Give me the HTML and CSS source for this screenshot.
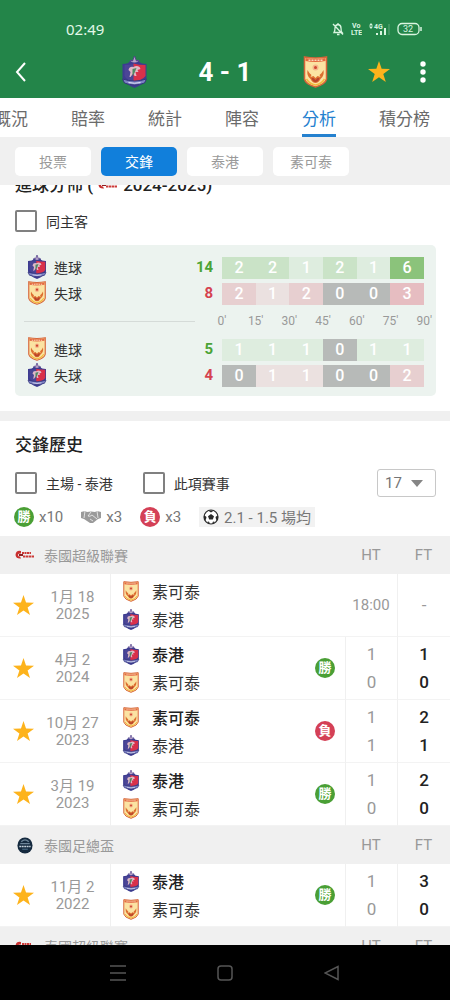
FILE: index.html
```html
<!DOCTYPE html>
<html lang="zh-Hant">
<head>
    <meta charset="UTF-8">
    <meta name="viewport" content="width=device-width, initial-scale=1.0">
    <title>分析 - 交鋒</title>
    <link rel="stylesheet" href="styles.css">
</head>
<body>
    <!-- icons -->
    <svg class="defs" width="0" height="0" aria-hidden="true">
        <symbol id="port" viewBox="0 0 26 32">
            <path d="M8 8 L9 4 L11 5 L13 0 L15 5 L17 4 L18 8Z" fill="#b9a3c9" stroke="#54438c" stroke-width="1"/>
            <path d="M1 8 Q7 8 9 5 Q13 8 17 5 Q19 8 25 8 V22 Q23 28 13 32 Q3 28 1 22Z" fill="#3d3c90"/>
            <path d="M3 9 Q9 9 13 7.500 V26 Q5 24 3 20Z" fill="#4b4596"/>
            <path d="M12 7.500 Q17 9 24 9 V20 Q21 24 12 26Z" fill="#d9304a"/>
            <path d="M7 14 Q8 10 12 11 Q15 9 18 11 L19 13 L16 14 L17 16 L14 16 L15 20 H13 L12 17 L9 21 H8 L9 16Z" fill="#e0b9c6"/>
            <path d="M11 13 L15 12 L13 17 L11 20Z" fill="#4f8a63"/>
            <path d="M1 23 Q13 27 25 23 L23 27 Q13 31 3 27Z" fill="#7d83c4" stroke="#34357c" stroke-width="1"/>
            <path d="M7 26.500 Q13 28 19 26.500" fill="none" stroke="#e4e4f5" stroke-width="1"/>
        </symbol>
        <symbol id="sukhothai" viewBox="0 0 24 32">
            <path d="M1 1 Q12 3 23 1 V23 Q22 28 12 31 Q2 28 1 23Z" fill="#fbe3a2" stroke="#d6653a" stroke-width="1.500"/>
            <path d="M2 2 Q12 4 22 2 V5 Q12 7 2 5Z" fill="#e5693f"/>
            <path d="M5 4.300 H19" stroke="#f9d9bc" stroke-width="1.500" stroke-dasharray="2 1"/>
            <circle cx="12" cy="11.500" r="3" fill="#f5b58a"/>
            <circle cx="12" cy="11.500" r="1.500" fill="#cf4630"/>
            <path d="M4 14 Q3 20 7 23 Q9 27 12 27 Q15 27 17 23 Q21 20 20 14 Q18 18 16 19 L17 21 L14 20 L12 22 L10 20 L7 21 L8 19 Q6 18 4 14Z" fill="#dd6f30"/>
            <path d="M8 22 L10 22 L12 24 L14 22 L16 22 Q15 26 12 26 Q9 26 8 22Z" fill="#b8432c"/>
            <path d="M3 23 Q6 28 12 29 Q18 28 21 23" fill="none" stroke="#f2b93c" stroke-width="1.500"/>
        </symbol>
        <symbol id="star" viewBox="0 0 20 20">
            <path d="M10 0 L12.400 7.100 L20 7.300 L13.900 11.800 L16.200 19 L10 14.700 L3.800 19 L6.100 11.800 L0 7.300 L7.600 7.100Z" fill="#fdb31c"/>
        </symbol>
        <symbol id="thaileague" viewBox="0 0 20 10">
            <path d="M6 1 Q1 0 0.500 5 Q1 9 6 8.500 L5 6.500 Q3 6.500 3 5 Q3 3 6 3.500Z" fill="#c9302f"/>
            <path d="M4 5 H8" stroke="#8d1f22" stroke-width="2"/>
            <path d="M7 3 H16" stroke="#cc3a38" stroke-width="2" stroke-dasharray="2 0.500"/>
            <path d="M8 6.500 H19" stroke="#cc3a38" stroke-width="2" stroke-dasharray="2.500 0.500"/>
        </symbol>
        <symbol id="facup" viewBox="0 0 18 18">
            <ellipse cx="9" cy="9" rx="8" ry="8.500" fill="#152a3f"/>
            <path d="M5 5 Q9 1 13 5 M4 7 H14" fill="none" stroke="#6d8498" stroke-width="1.300"/>
            <path d="M3 10 H15" stroke="#c6d2dc" stroke-width="1.700" stroke-dasharray="2 0.600"/>
            <path d="M6 13 H12" stroke="#3f5c73" stroke-width="1.500"/>
        </symbol>
    </svg>

    <header class="header">
        <div class="status">
            <span class="clock">02:49</span>
            <div class="status-icons">
                <svg width="12" height="14" viewBox="0 0 12 14" fill="none" stroke="#d9f5e0" stroke-width="1.300">
                    <path d="M2 10.500 H10 Q9 9.500 9 6 Q9 3 6 2.500 Q3 3 3 6 Q3 9 2 10.500Z M6 2.500 V1 M5 12.500 H7.500 M1 2 L11 12.500"/>
                </svg>
                <svg width="11" height="14" viewBox="0 0 11 14" class="tiny" aria-label="VoLTE">
                    <text x="1" y="6">Vo</text>
                    <text x="0" y="13">LTE</text>
                </svg>
                <svg width="21" height="14" viewBox="0 0 21 14" class="tiny">
                    <path d="M2 1 L4 3.500 H0Z M2 7 L4 4.500 H0Z" fill="#d9f5e0"/>
                    <text x="5" y="7">4G</text>
                    <path d="M8 11 V13 M12 9 V13 M16 6 V13" stroke="#d9f5e0" stroke-width="2" fill="none"/>
                    <path d="M20 2 V13" stroke="#5fa67a" stroke-width="1" fill="none"/>
                </svg>
                <svg width="25" height="14" viewBox="0 0 25 14" class="tiny">
                    <rect x="1" y="1.500" width="21" height="11" rx="4" fill="none" stroke="#d9f5e0" stroke-width="1.300"/>
                    <path d="M24 5 V9" stroke="#d9f5e0" stroke-width="1.500"/>
                    <text x="6" y="10" class="battery">32</text>
                </svg>
            </div>
        </div>
        <div class="appbar">
            <button class="icon-btn back" aria-label="返回">
                <svg width="14" height="20" viewBox="0 0 14 20"><path d="M11 1 L3 10 L11 19" fill="none" stroke="#fff" stroke-width="2"/></svg>
            </button>
            <div class="match">
                <svg width="27" height="32"><use href="#port"/></svg>
                <h1 class="score">4 - 1</h1>
                <svg width="27" height="32"><use href="#sukhothai"/></svg>
            </div>
            <div class="actions">
                <button class="icon-btn" aria-label="收藏"><svg width="22" height="22"><use href="#star"/></svg></button>
                <button class="icon-btn" aria-label="更多">
                    <svg width="6" height="24" viewBox="0 0 6 24" fill="#fff"><circle cx="3" cy="4" r="2.700"/><circle cx="3" cy="12" r="2.700"/><circle cx="3" cy="20" r="2.700"/></svg>
                </button>
            </div>
        </div>
    </header>

    <nav class="tabs">
        <a href="#">概況</a>
        <a href="#">賠率</a>
        <a href="#">統計</a>
        <a href="#">陣容</a>
        <a href="#" class="active">分析</a>
        <a href="#">積分榜</a>
    </nav>

    <div class="pills">
        <button class="pill">投票</button>
        <button class="pill active">交鋒</button>
        <button class="pill">泰港</button>
        <button class="pill">素可泰</button>
    </div>

    <main class="content">
        <section class="goals">
            <h2 class="title">進球分佈 ( <svg width="20" height="10"><use href="#thaileague"/></svg> 2024-2025)</h2>
            <label class="check"><input type="checkbox"> 同主客</label>

            <div class="card">
                <div class="row">
                    <div class="team">
                        <svg width="20" height="24"><use href="#port"/></svg>
                        <span>進球</span>
                        <b class="for">14</b>
                    </div>
                    <div class="heat">
                        <span class="g2">2</span><span class="g2">2</span><span class="g1">1</span><span class="g2">2</span><span class="g1">1</span><span class="g6">6</span>
                    </div>
                </div>
                <div class="row">
                    <div class="team">
                        <svg width="20" height="24"><use href="#sukhothai"/></svg>
                        <span>失球</span>
                        <b class="against">8</b>
                    </div>
                    <div class="heat">
                        <span class="r2">2</span><span class="r1">1</span><span class="r2">2</span><span class="zero">0</span><span class="zero">0</span><span class="r3">3</span>
                    </div>
                </div>
                <div class="row axis">
                    <div class="line"></div>
                    <div class="minutes">
                        <span>0'</span><span>15'</span><span>30'</span><span>45'</span><span>60'</span><span>75'</span><span>90'</span>
                    </div>
                </div>
                <div class="row">
                    <div class="team">
                        <svg width="20" height="24"><use href="#sukhothai"/></svg>
                        <span>進球</span>
                        <b class="for">5</b>
                    </div>
                    <div class="heat">
                        <span class="g1">1</span><span class="g1">1</span><span class="g1">1</span><span class="zero">0</span><span class="g1">1</span><span class="g1">1</span>
                    </div>
                </div>
                <div class="row">
                    <div class="team">
                        <svg width="20" height="24"><use href="#port"/></svg>
                        <span>失球</span>
                        <b class="against">4</b>
                    </div>
                    <div class="heat">
                        <span class="zero">0</span><span class="r1">1</span><span class="r1">1</span><span class="zero">0</span><span class="zero">0</span><span class="r2">2</span>
                    </div>
                </div>
            </div>
        </section>

        <section class="history">
            <h2 class="title">交鋒歷史</h2>
            <div class="filters">
                <label class="check"><input type="checkbox"> 主場 - 泰港</label>
                <label class="check"><input type="checkbox"> 此項賽事</label>
                <div class="select">
                    <select aria-label="場數">
                        <option>17</option>
                        <option>10</option>
                    </select>
                    <svg width="12" height="8" viewBox="0 0 12 8"><path d="M0 1 H12 L6 8Z" fill="#858585"/></svg>
                </div>
            </div>
            <div class="summary">
                <span class="stat"><i class="badge win">勝</i>x10</span>
                <span class="stat">
                    <svg width="20" height="14" viewBox="0 0 20 14">
                        <path d="M0 2 L4 1 L6 2 L10 1.500 L14 2 L16 1 L20 2 V8 L17 9 L12 13 L9 13 L3 9 L0 8Z" fill="#9a9a9a"/>
                        <path d="M10 2 L7 6 Q9 7 11 5 L16 9 M9 9 L12 11 M4 1 L3 8 M16 1 L17 8" fill="none" stroke="#fff" stroke-width="0.700"/>
                    </svg>x3
                </span>
                <span class="stat"><i class="badge lose">負</i>x3</span>
                <span class="stat average">
                    <svg width="16" height="16" viewBox="0 0 16 16">
                        <circle cx="8" cy="8" r="7" fill="#fff" stroke="#2a2a2a" stroke-width="1.200"/>
                        <path d="M8 5 L11 7.200 L9.800 10.500 H6.200 L5 7.200Z M5 1.500 H11 L8 3.500Z M1 6 L3.500 8 L2.800 11 L1 10Z M15 6 L12.500 8 L13.200 11 L15 10Z M4 13 L6 12.500 L7 15Z M12 13 L10 12.500 L9 15Z" fill="#2a2a2a"/>
                    </svg>2.1 - 1.5 場均
                </span>
            </div>

            <table class="matches">
                <colgroup>
                    <col class="c-star"><col class="c-date"><col><col class="c-result"><col class="c-ht"><col class="c-ft">
                </colgroup>
                <tbody>
                    <tr class="league">
                        <th colspan="4"><div><svg width="20" height="10"><use href="#thaileague"/></svg>泰國超級聯賽</div></th>
                        <th>HT</th>
                        <th>FT</th>
                    </tr>
                    <tr>
                        <td class="fav"><button class="icon-btn" aria-label="收藏"><svg width="21" height="21"><use href="#star"/></svg></button></td>
                        <td class="date">1月 18<br>2025</td>
                        <td class="teams">
                            <div><svg width="18" height="21"><use href="#sukhothai"/></svg>素可泰</div>
                            <div><svg width="18" height="21"><use href="#port"/></svg>泰港</div>
                        </td>
                        <td></td>
                        <td class="time">18:00</td>
                        <td class="ft none">-</td>
                    </tr>
                    <tr>
                        <td class="fav"><button class="icon-btn" aria-label="收藏"><svg width="21" height="21"><use href="#star"/></svg></button></td>
                        <td class="date">4月 2<br>2024</td>
                        <td class="teams">
                            <div class="winner"><svg width="18" height="21"><use href="#port"/></svg>泰港</div>
                            <div><svg width="18" height="21"><use href="#sukhothai"/></svg>素可泰</div>
                        </td>
                        <td class="result"><i class="badge win">勝</i></td>
                        <td class="ht">1<br>0</td>
                        <td class="ft">1<br>0</td>
                    </tr>
                    <tr>
                        <td class="fav"><button class="icon-btn" aria-label="收藏"><svg width="21" height="21"><use href="#star"/></svg></button></td>
                        <td class="date">10月 27<br>2023</td>
                        <td class="teams">
                            <div class="winner"><svg width="18" height="21"><use href="#sukhothai"/></svg>素可泰</div>
                            <div><svg width="18" height="21"><use href="#port"/></svg>泰港</div>
                        </td>
                        <td class="result"><i class="badge lose">負</i></td>
                        <td class="ht">1<br>1</td>
                        <td class="ft">2<br>1</td>
                    </tr>
                    <tr>
                        <td class="fav"><button class="icon-btn" aria-label="收藏"><svg width="21" height="21"><use href="#star"/></svg></button></td>
                        <td class="date">3月 19<br>2023</td>
                        <td class="teams">
                            <div class="winner"><svg width="18" height="21"><use href="#port"/></svg>泰港</div>
                            <div><svg width="18" height="21"><use href="#sukhothai"/></svg>素可泰</div>
                        </td>
                        <td class="result"><i class="badge win">勝</i></td>
                        <td class="ht">1<br>0</td>
                        <td class="ft">2<br>0</td>
                    </tr>
                </tbody>
                <tbody>
                    <tr class="league">
                        <th colspan="4"><div><svg width="20" height="17"><use href="#facup"/></svg>泰國足總盃</div></th>
                        <th>HT</th>
                        <th>FT</th>
                    </tr>
                    <tr>
                        <td class="fav"><button class="icon-btn" aria-label="收藏"><svg width="21" height="21"><use href="#star"/></svg></button></td>
                        <td class="date">11月 2<br>2022</td>
                        <td class="teams">
                            <div class="winner"><svg width="18" height="21"><use href="#port"/></svg>泰港</div>
                            <div><svg width="18" height="21"><use href="#sukhothai"/></svg>素可泰</div>
                        </td>
                        <td class="result"><i class="badge win">勝</i></td>
                        <td class="ht">1<br>0</td>
                        <td class="ft">3<br>0</td>
                    </tr>
                </tbody>
                <tbody>
                    <tr class="league">
                        <th colspan="4"><div><svg width="20" height="10"><use href="#thaileague"/></svg>泰國超級聯賽</div></th>
                        <th>HT</th>
                        <th>FT</th>
                    </tr>
                </tbody>
            </table>
        </section>
    </main>

    <footer class="sysnav">
        <button class="icon-btn" aria-label="選單"><svg width="16" height="16" viewBox="0 0 16 16"><path d="M0 1 H16 M0 8 H16 M0 15 H16"/></svg></button>
        <button class="icon-btn" aria-label="主畫面"><svg width="16" height="16" viewBox="0 0 16 16"><rect x="1" y="1" width="14" height="14" rx="3"/></svg></button>
        <button class="icon-btn" aria-label="上一頁"><svg width="16" height="16" viewBox="0 0 16 16"><path d="M14 1.500 V14.500 L1 8Z"/></svg></button>
    </footer>
</body>
</html>
```

FILE: styles.css
```css
* {
    box-sizing: border-box;
}
body {
    margin: 0;
    height: 100vh;
    display: flex;
    flex-direction: column;
    overflow: hidden;
    background: #fff;
    color: #333;
    font-family: Roboto, "Noto Sans CJK TC", sans-serif;
    font-size: 15px;
}
svg {
    display: block;
    flex: none;
}
.defs {
    position: absolute;
}
h1, h2 {
    margin: 0;
}
button, select, input {
    font: inherit;
}
.icon-btn {
    display: flex;
    align-items: center;
    justify-content: center;
    padding: 0;
    border: none;
    background: none;
}

/* header */
.header {
    background: #238549;
    color: #fff;
}
.status {
    height: 46px;
    padding: 12px 28px 0 66px;
    display: flex;
    align-items: center;
    justify-content: space-between;
    color: #e2f8e8;
}
.clock {
    font-family: "Noto Sans", sans-serif;
    font-size: 15px;
}
.status-icons {
    display: flex;
    gap: 7px;
}
.tiny text {
    font-size: 7px;
    font-weight: bold;
    fill: #d9f5e0;
}
.tiny .battery {
    font-size: 9px;
    font-weight: normal;
}
.appbar {
    height: 52px;
    padding: 0 14px;
    display: grid;
    grid-template-columns: 1fr 208px 1fr;
    align-items: center;
}
.back {
    justify-self: start;
}
.match {
    display: flex;
    align-items: center;
    justify-content: space-between;
}
.score {
    font-size: 26px;
    font-weight: bold;
}
.actions {
    display: flex;
    justify-content: flex-end;
    gap: 18px;
}
.actions .icon-btn {
    width: 26px;
}

/* tabs */
.tabs {
    height: 39px;
    margin-left: -6px;
    display: flex;
    gap: 43px;
    white-space: nowrap;
}
.tabs a {
    color: #6b6b6b;
    font-size: 17px;
    line-height: 42px;
    text-decoration: none;
}
.tabs .active {
    color: #2581cf;
    border-bottom: 3px solid #2581cf;
}
.pills {
    height: 48px;
    padding: 0 15px;
    display: flex;
    align-items: center;
    gap: 10px;
    background: #f0f0f0;
}
.pill {
    width: 76px;
    height: 29px;
    padding: 0;
    border: none;
    border-radius: 5px;
    background: #fff;
    color: #999;
    font-size: 14px;
}
.pill.active {
    background: #117fdb;
    color: #fff;
}

.content {
    flex: 1;
    min-height: 0;
    overflow: hidden;
}
.title {
    display: flex;
    align-items: center;
    gap: 5px;
    color: #222;
    font-size: 17px;
    font-weight: 500;
    line-height: 24px;
}
.check {
    display: flex;
    align-items: center;
    gap: 9px;
    height: 28px;
    font-size: 14px;
}
.check input {
    appearance: none;
    width: 22px;
    height: 22px;
    margin: 0;
    border: 2px solid #808080;
    border-radius: 2px;
}
.check input:checked {
    background: #117fdb;
}

/* goal distribution */
.goals {
    padding: 0 14px 15px 15px;
    border-bottom: 10px solid #f0f0f0;
}
.goals .title {
    margin: -12px 0 10px;
}
.card {
    margin-top: 10px;
    padding: 9px 12px 8px;
    border-radius: 5px;
    background: #ecf3ef;
}
.row {
    display: grid;
    grid-template-columns: 29fr 30fr;
    align-items: center;
    height: 26px;
}
.team {
    display: flex;
    align-items: center;
    gap: 7px;
    padding-right: 9px;
    font-size: 14px;
}
.team b {
    margin-left: auto;
    font-size: 15px;
}
.for {
    color: #4ba336;
}
.against {
    color: #d5424f;
}
.heat {
    display: grid;
    grid-template-columns: repeat(6, 1fr);
    height: 21px;
    color: #fff;
    font-size: 16px;
    font-weight: 500;
    line-height: 22px;
    text-align: center;
}
.g1 { background: #deeddf; }
.g2 { background: #cae3c7; }
.g6 { background: #8bc37b; }
.r1 { background: #ebe1e0; }
.r2 { background: #e7cfd0; }
.r3 { background: #e6bdc1; }
.zero { background: #b7bab8; }
.axis {
    height: 30px;
}
.line {
    height: 1px;
    margin: 0 27px 0 -3px;
    background: #d5dbd8;
}
.minutes {
    display: flex;
    margin: 0 -17px;
    color: #999;
    font-size: 12px;
}
.minutes span {
    flex: 1;
    text-align: center;
}

/* head to head */
.history > .title {
    padding: 12px 15px;
}
.filters {
    display: flex;
    align-items: center;
    gap: 30px;
    padding: 0 14px 0 15px;
}
.select {
    position: relative;
    margin-left: auto;
}
.select select {
    appearance: none;
    display: block;
    width: 59px;
    height: 28px;
    padding: 0 7px;
    border: 1px solid #c8c8c8;
    border-radius: 3px;
    background: #fff;
    color: #757575;
    font-size: 15px;
}
.select svg {
    position: absolute;
    top: 10px;
    right: 13px;
    pointer-events: none;
}
.summary {
    display: flex;
    align-items: center;
    gap: 18px;
    height: 39px;
    padding: 0 14px;
    color: #777;
}
.stat {
    display: flex;
    align-items: center;
    gap: 5px;
}
.average {
    height: 20px;
    padding: 0 4px;
    background: #f2f2f2;
}
.badge {
    display: block;
    width: 20px;
    height: 20px;
    border-radius: 50%;
    color: #fff;
    font-size: 13px;
    font-style: normal;
    font-weight: bold;
    line-height: 20px;
    text-align: center;
}
.win {
    background: #4a9f35;
}
.lose {
    background: #d44056;
}

.matches {
    width: 100%;
    table-layout: fixed;
    border-collapse: separate;
    border-spacing: 0;
}
.c-star { width: 35px; }
.c-date { width: 75px; }
.c-result { width: 40px; }
.c-ht { width: 52px; }
.c-ft { width: 53px; }
.matches td {
    height: 63px;
    padding: 0;
    border-bottom: 1px solid #f3f3f3;
}
.league th {
    height: 38px;
    padding: 0;
    background: #f0f0f0;
    color: #999;
    font-weight: normal;
}
.league div {
    display: flex;
    align-items: center;
    gap: 9px;
    padding-left: 15px;
    font-size: 14px;
}
.matches .fav {
    padding-left: 13px;
}
.matches .date {
    padding-top: 2px;
    color: #999;
    line-height: 17px;
    text-align: center;
}
.matches .teams {
    padding-left: 11px;
    border-left: 1px solid #f0f0f0;
    color: #333;
    font-size: 16px;
}
.teams div {
    display: flex;
    align-items: center;
    gap: 12px;
    height: 28px;
}
.teams .winner {
    color: #222;
    font-weight: 500;
}
.matches .result {
    padding-left: 10px;
}
.ht, .ft {
    border-left: 1px solid #f0f0f0;
    font-size: 17px;
    line-height: 28px;
    text-align: center;
}
.ht {
    color: #999;
}
.ft {
    color: #222;
    font-weight: 500;
}
.time, .matches .none {
    color: #999;
    font-weight: normal;
    text-align: center;
}

/* system bar */
.sysnav {
    height: 55px;
    display: flex;
    align-items: center;
    justify-content: center;
    gap: 91px;
    background: #000;
}
.sysnav svg {
    fill: none;
    stroke: #555;
    stroke-width: 1.5;
}
```
